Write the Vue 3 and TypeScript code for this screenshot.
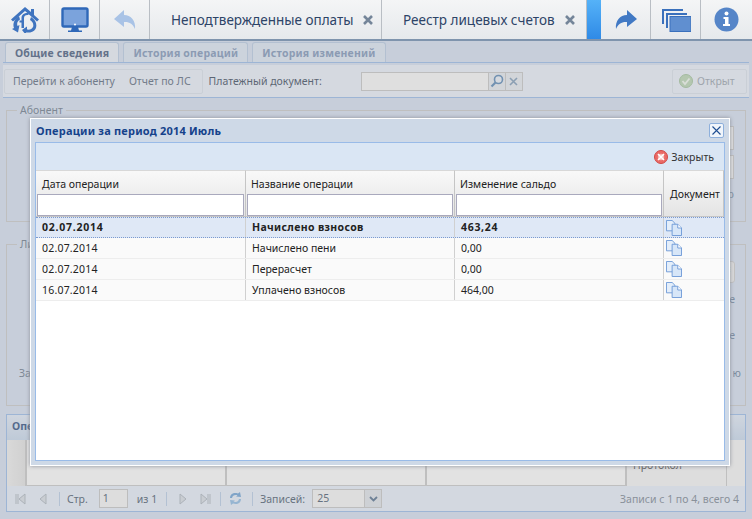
<script setup lang="ts">
const rows = [
  { date: '02.07.2014', name: 'Начислено взносов', sum: '463,24', active: true },
  { date: '02.07.2014', name: 'Начислено пени', sum: '0,00', active: false },
  { date: '02.07.2014', name: 'Перерасчет', sum: '0,00', active: false },
  { date: '16.07.2014', name: 'Уплачено взносов', sum: '464,00', active: false },
]
</script>

<template>
  <div class="page">
    <!-- top bar -->
    <header class="topbar">
      <button class="tbtn">
        <svg width="28" height="26" viewBox="0 0 28 26">
          <path d="M14 0 L20 5 V2 H23 V8 L28 12.500 L26 14.500 L14 4 L2 14.500 L0 12.500Z" fill="#3f74bf" />
          <path d="M8 9 C3 12 1.500 17 3 21 L1 22 L7 25.500 L8.500 18 L6.500 19 C5.500 16 6.500 14 9 12.500Z" fill="#3f74bf" />
          <path d="M20 10 C25 13 26.500 18 24.500 22 C22.500 25 19 26 15 25.500 L15 28 L11 23 L16 19.500 L16 22.500 C19 23 21 22 22 20 C23 17 21.500 14.500 19 13Z" fill="#3f74bf" />
          <path d="M17.500 8 C15 7.500 13 8.500 13 11 V21 H10.500 V15.500 H8.500 V13.500 H10.500 V11 C10.500 7 14 5.500 17.500 6Z" fill="#3f74bf" />
        </svg>
      </button>
      <button class="tbtn">
        <svg width="28" height="26" viewBox="0 0 28 26">
          <rect x="1.500" y="1.500" width="25" height="18" rx="1.500" fill="#7ba3dc" stroke="#2f68b8" stroke-width="2.400" />
          <circle cx="14" cy="17.500" r="1" fill="#fff" />
          <path d="M11 20 H17 L18 23.500 H21 V25 H7 V23.500 H10Z" fill="#2f68b8" />
        </svg>
      </button>
      <button class="tbtn">
        <svg width="24" height="22" viewBox="0 0 24 22">
          <path d="M11 1 L1 10 L11 18 V13 C16 12.500 20 15 22 20 C23 12 18 6 11 6Z" fill="#a9c3e6" />
        </svg>
      </button>
      <div class="ttab first">
        Неподтвержденные оплаты
        <svg class="tx" width="10" height="10" viewBox="0 0 10 10"><path d="M1 1 L9 9 M9 1 L1 9" stroke="#748599" stroke-width="2.600" /></svg>
      </div>
      <div class="ttab second">
        Реестр лицевых счетов
        <svg class="tx" width="10" height="10" viewBox="0 0 10 10"><path d="M1 1 L9 9 M9 1 L1 9" stroke="#748599" stroke-width="2.600" /></svg>
      </div>
      <div class="tblue"></div>
      <button class="tbtn">
        <svg width="24" height="22" viewBox="0 0 24 22">
          <path d="M13 1 L23 10 L13 18 V13 C8 12.500 4 15 2 20 C1 12 6 6 13 6Z" fill="#4179c4" />
        </svg>
      </button>
      <button class="tbtn">
        <svg width="30" height="24" viewBox="0 0 30 24">
          <path d="M1 16 V1 H22 V3 H3 V16Z" fill="#3a70bc" />
          <path d="M5 20 V5 H26 V7 H7 V20Z" fill="#3a70bc" />
          <rect x="9" y="8.500" width="21" height="15" fill="#608fd0" stroke="#3a70bc" />
        </svg>
      </button>
      <button class="tbtn last">
        <svg width="25" height="25" viewBox="0 0 25 25">
          <circle cx="12.500" cy="12.500" r="12" fill="#5585c8" />
          <circle cx="12.500" cy="6.500" r="2" fill="#fff" />
          <path d="M9.500 10 H14.500 V17 H16 V19 H9 V17 H11 V12 H9.500Z" fill="#fff" />
        </svg>
      </button>
    </header>

    <!-- background card, dimmed by the modal mask -->
    <main class="content">
      <nav class="subtabs">
        <div class="subtab on">Общие сведения</div>
        <div class="subtab">История операций</div>
        <div class="subtab">История изменений</div>
      </nav>
      <div class="toolbar">
        <div class="btn-group">
          <span>Перейти к абоненту</span>
          <span>Отчет по ЛС</span>
        </div>
        <label class="doc-label">Платежный документ:</label>
        <div class="doc-field">
          <div class="doc-input"></div>
          <div class="doc-btn">
            <svg width="14" height="14" viewBox="0 0 14 14">
              <circle cx="8.500" cy="5.500" r="4" fill="#e8eef6" stroke="#5a87b5" stroke-width="1.600" />
              <path d="M5.500 8.500 L1.500 12.500" stroke="#5a87b5" stroke-width="2.200" />
            </svg>
          </div>
          <div class="doc-btn clear">
            <svg width="9" height="9" viewBox="0 0 9 9">
              <path d="M1 1 L8 8 M8 1 L1 8" stroke="#7f9bb8" stroke-width="1.600" />
            </svg>
          </div>
        </div>
        <div class="open-btn">
          <svg width="14" height="14" viewBox="0 0 14 14">
            <circle cx="7" cy="7" r="6.500" fill="#b9d4b4" stroke="#a2c29c" />
            <path d="M3.500 7 L6 10 L10.500 4.500" fill="none" stroke="#eef5ec" stroke-width="1.800" />
          </svg>
          Открыт
        </div>
      </div>

      <div class="body">
        <fieldset class="fs fs-top">
          <legend>Абонент</legend>
          <div class="stubs">
            <div class="stub"></div>
            <div class="stub"></div>
            <span class="frag">ю</span>
          </div>
        </fieldset>
        <fieldset class="fs fs-mid">
          <legend>Ли</legend>
          <div class="mid-right">
            <div class="mini-btn">≡</div>
            <span class="frag">е</span>
            <span class="frag second-e">е</span>
          </div>
          <div class="mid-row"><span>За</span><span class="frag">ю</span></div>
        </fieldset>
        <section class="ops">
          <div class="ops-head">Опе</div>
          <div class="ops-grid">
            <div class="oc w0"></div>
            <div class="oc w1"></div>
            <div class="oc w1"></div>
            <div class="oc w1"></div>
            <div class="oc w4"><span>Протокол</span></div>
            <div class="oc w5"></div>
          </div>
          <footer class="pager">
            <svg class="pg" width="11" height="12" viewBox="0 0 11 12"><path d="M1 1 V11 M3 1 V11 M10 1 L4 6 L10 11Z" fill="#d7dde4" stroke="#adb6c0" /></svg>
            <svg class="pg" width="8" height="12" viewBox="0 0 8 12"><path d="M7 1 L1 6 L7 11Z" fill="#d7dde4" stroke="#adb6c0" /></svg>
            <i class="sep"></i>
            <span>Стр.</span>
            <div class="page-input">1</div>
            <span class="of">из 1</span>
            <i class="sep"></i>
            <svg class="pg nx" width="8" height="12" viewBox="0 0 8 12"><path d="M1 1 L7 6 L1 11Z" fill="#d7dde4" stroke="#adb6c0" /></svg>
            <svg class="pg lst" width="11" height="12" viewBox="0 0 11 12"><path d="M10 1 V11 M8 1 V11 M1 1 L7 6 L1 11Z" fill="#d7dde4" stroke="#adb6c0" /></svg>
            <i class="sep"></i>
            <svg width="15" height="15" viewBox="0 0 15 15"><path d="M2 7 C2 3 6 1 10 2.500 L12 1 L13 6 L8 5.500 L9.500 4.500 C7 3.500 4.500 4.500 4 7Z" fill="#6fa3d6" /><path d="M13 8 C13 12 9 14 5 12.500 L3 14 L2 9 L7 9.500 L5.500 10.500 C8 11.500 10.500 10.500 11 8Z" fill="#8fbbe3" /></svg>
            <i class="sep"></i>
            <span>Записей:</span>
            <div class="size-combo">
              <div class="size-val">25</div>
              <div class="size-arrow"><svg width="9" height="6" viewBox="0 0 9 6"><path d="M1 1 L4.500 4.500 L8 1" fill="none" stroke="#55708f" stroke-width="1.800" /></svg></div>
            </div>
            <span class="total">Записи с 1 по 4, всего 4</span>
          </footer>
        </section>
      </div>
    </main>
    <div class="mask"></div>

    <!-- modal window -->
    <section class="win">
      <div class="win-title">
        <span>Операции за период 2014 Июль</span>
        <button class="win-close">
          <svg width="9" height="9" viewBox="0 0 9 9"><path d="M0.500 0.500 L8.500 8.500 M8.500 0.500 L0.500 8.500" stroke="#1f4e93" stroke-width="1.100" /></svg>
        </button>
      </div>
      <div class="win-body">
        <div class="win-tools">
          <svg width="14" height="14" viewBox="0 0 14 14">
            <circle cx="7" cy="7" r="6.500" fill="#ea6a66" stroke="#cf4a46" />
            <circle cx="7" cy="7" r="3.200" fill="#f6b9b5" />
            <path d="M4 4 L10 10 M10 4 L4 10" stroke="#fff" stroke-width="1.500" />
          </svg>
          <span>Закрыть</span>
        </div>
        <div class="thead">
          <div class="th"><div class="th-t">Дата операции</div><div class="filter"></div></div>
          <div class="th"><div class="th-t">Название операции</div><div class="filter"></div></div>
          <div class="th"><div class="th-t">Изменение сальдо</div><div class="filter"></div></div>
          <div class="th doc">Документ</div>
        </div>
        <div v-for="(r, i) in rows" :key="i" class="tr" :class="{ active: r.active }">
          <div class="td date">{{ r.date }}</div>
          <div class="td">{{ r.name }}</div>
          <div class="td sum">{{ r.sum }}</div>
          <div class="td ic">
            <svg width="16" height="16" viewBox="0 0 17 17">
              <path d="M0.500 0.500 H6.500 L9.500 3.500 V11.500 H0.500Z" fill="#e4eefa" stroke="#6f9bd8" />
              <path d="M6.500 4.500 H12.500 L16.500 8.500 V16.500 H6.500Z" fill="#d7e6f8" stroke="#6f9bd8" />
              <path d="M12.500 4.500 V8.500 H16.500" fill="#fff" stroke="#6f9bd8" />
            </svg>
          </div>
        </div>
      </div>
    </section>
  </div>
</template>

<style scoped>
.page {
  position: relative;
  width: 752px;
  height: 519px;
  overflow: hidden;
  background: #dfe8f6;
  font-family: "Noto Sans", "Liberation Sans", sans-serif;
  font-size: 10.5px;
  color: #222;
}

/* top bar */
.topbar {
  display: flex;
  height: 39px;
  background: linear-gradient(#f4f5f6, #e6e9ec);
  border-bottom: 2px solid #7f94ad;
}
.tbtn {
  width: 50px;
  flex: none;
  padding: 0;
  border: 0;
  border-right: 1px solid #b9bec4;
  background: none;
  display: flex;
  align-items: center;
  justify-content: center;
}
.tbtn.last {
  border-right: 0;
  flex: 1;
}
.ttab {
  display: flex;
  align-items: center;
  flex: none;
  padding-left: 21px;
  font-size: 13.5px;
  color: #2d4467;
  border-right: 1px solid #b9bec4;
}
.ttab.first { width: 232px; box-sizing: border-box; }
.ttab.second { width: 205px; box-sizing: border-box; }
.tx { margin-left: 10px; }
.tblue {
  width: 14px;
  flex: none;
  background: linear-gradient(#55b2f8, #2f8ae6);
}

/* background */
.content {
  height: 478px;
  padding: 1px 3px 0;
  box-sizing: border-box;
  background: #d4dff0;
}
.subtabs {
  display: flex;
  gap: 4px;
  height: 20px;
  padding-left: 2px;
  border-bottom: 1px solid #99bbe8;
}
.subtab {
  padding: 3px 9px 0;
  font-weight: 700;
  letter-spacing: 0.2px;
  color: #7f95b8;
  background: #dbe5f3;
  border: 1px solid #b8cae2;
  border-bottom: 0;
  border-radius: 3px 3px 0 0;
}
.subtab.on {
  color: #465a7d;
  background: #e8eef6;
}
.toolbar {
  display: flex;
  align-items: center;
  height: 32px;
  padding: 0 1px;
  margin-top: 2px;
  background: #e8eef8;
  border-bottom: 1px solid #99bbe8;
  color: #3c4a5e;
}
.btn-group {
  display: flex;
  gap: 14px;
  padding: 3px 11px 3px 8px;
  height: 25px;
  box-sizing: border-box;
  align-items: center;
  border: 1px solid #d8e0ea;
  border-radius: 2px;
  color: #5a687c;
}
.doc-label { margin-left: 6px; width: 152px; }
.doc-field { display: flex; height: 19px; }
.doc-input {
  width: 128px;
  background: #f6f6f6;
  border: 1px solid #c6c6c6;
  box-sizing: border-box;
}
.doc-btn {
  width: 16px;
  display: flex;
  align-items: center;
  justify-content: center;
  background: #e4e8ee;
  border: 1px solid #c6c6c6;
  border-left: 0;
}
.open-btn {
  margin-left: auto;
  margin-right: 1px;
  display: flex;
  align-items: center;
  gap: 4px;
  width: 75px;
  height: 25px;
  box-sizing: border-box;
  padding-left: 6px;
  color: #9aa3ad;
  border: 1px solid #d8e0ea;
  border-radius: 2px;
}
.body { padding: 0 0 0 3px; }
.fs {
  margin: 0 3px 0 0;
  padding: 0;
  border: 1px solid #c9c9c9;
  color: #6c7a8c;
  position: relative;
}
.fs legend { margin-left: 10px; padding: 0 3px; }
.fs-top { height: 117px; margin-top: 5px; }
.fs-mid { height: 167px; margin-top: 15px; }
.stubs {
  position: absolute;
  top: 9px;
  right: 11px;
  display: flex;
  flex-direction: column;
  align-items: flex-end;
  gap: 5px;
}
.stub {
  width: 20px;
  height: 22px;
  background: #f6f6f6;
  border: 1px solid #c8c8c8;
}
.stubs .frag { margin-top: 3px; }
.frag { color: #6a7f9a; }
.mid-right {
  position: absolute;
  top: 10px;
  right: 10px;
  display: flex;
  flex-direction: column;
  align-items: flex-end;
  gap: 9px;
}
.second-e { margin-top: 13px; }
.mini-btn {
  width: 14px;
  height: 20px;
  text-align: center;
  background: #eee;
  border: 1px solid #ccc;
  border-radius: 3px;
}
.mid-row {
  position: absolute;
  top: 115px;
  left: 12px;
  right: 4px;
  display: flex;
  justify-content: space-between;
}
.ops {
  margin: 8px 3px 0 0;
  height: 98px;
  border: 1px solid #99bbe8;
  box-sizing: border-box;
}
.ops-head {
  height: 25px;
  box-sizing: border-box;
  padding: 4px 5px 0;
  font-weight: 700;
  color: #2f4f80;
  background: linear-gradient(#e0e9f6, #c8d8ec);
}
.ops-grid {
  display: flex;
  height: 46px;
  background: #f0f0f0;
}
.oc { box-sizing: border-box; border-right: 2px solid #c9c9c9; border-bottom: 1px solid #c9c9c9; background: #fbfbfb; }
.w0 { width: 20px; background: linear-gradient(90deg, #eee, #e2e2e2); border-bottom: 0; }
.w1 { width: 200px; }
.w4 { width: 100px; border-right-width: 1px; background: #f4f4f4; border-bottom: 0; overflow: hidden; }
.w4 span { display: block; padding: 18px 0 0 6px; color: #444; }
.w5 { flex: 1; border-right: 0; border-bottom: 0; background: #f4f4f4; }
.pager {
  display: flex;
  align-items: center;
  gap: 7px;
  height: 25px;
  padding: 0 6px 0 5px;
  color: #4a5a6e;
  background: #e6edf8;
}
.sep { width: 1px; height: 14px; margin-left: 2px; background: #b8cce6; }
.pg { margin: 0 3px; }
.pg.nx { margin-left: 5px; }
.pg.lst { margin-right: 0; }
.page-input {
  width: 29px;
  height: 19px;
  margin-left: 4px;
  box-sizing: border-box;
  padding-left: 3px;
  line-height: 17px;
  background: #f4f4f4;
  border: 1px solid #c6c6c6;
}
.of { margin-left: 2px; }
.size-combo { display: flex; height: 19px; }
.size-val {
  width: 47px;
  padding-left: 4px;
  line-height: 17px;
  background: #f4f4f4;
  border: 1px solid #c6c6c6;
}
.size-arrow {
  width: 16px;
  display: flex;
  align-items: center;
  justify-content: center;
  background: #dfe3e8;
  border: 1px solid #c6c6c6;
  border-left: 0;
}
.total { margin-left: auto; color: #7c8794; }

.mask {
  position: absolute;
  inset: 41px 0 0;
  background: rgba(170, 170, 170, 0.3);
}

/* modal */
.win {
  position: absolute;
  left: 30px;
  top: 118px;
  width: 700px;
  height: 348px;
  box-sizing: border-box;
  background: #ced9e7;
  border: 1px solid #fff;
  box-shadow: 0 0 4px #8c9099;
  padding: 0 4px 4px;
  display: flex;
  flex-direction: column;
}
.win-title {
  display: flex;
  align-items: center;
  justify-content: space-between;
  height: 23px;
  flex: none;
  font-size: 11px;
  font-weight: 700;
  letter-spacing: 0.2px;
  color: #15428b;
}
.win-title span { margin-left: 1px; }
.win-close {
  width: 15px;
  height: 15px;
  padding: 0;
  margin-right: 1px;
  display: flex;
  align-items: center;
  justify-content: center;
  background: #f0f5fb;
  border: 1px solid #8eb0dc;
  border-radius: 2px;
}
.win-body {
  flex: 1;
  background: #fff;
  border: 1px solid #99bbe8;
}
.win-tools {
  display: flex;
  align-items: center;
  justify-content: flex-end;
  gap: 4px;
  height: 27px;
  padding-right: 10px;
  background: #dae6f4;
  color: #333;
}
.thead {
  display: flex;
  height: 47px;
  box-sizing: border-box;
  border-bottom: 1px solid #c5c5c5;
  background: linear-gradient(#f9f9f9, #e4e4e4);
}
.th {
  width: 209px;
  flex: none;
  box-sizing: border-box;
  border-right: 1px solid #c5c5c5;
  border-top: 1px solid #d8d8d8;
}
.th:first-child, .td:first-child { width: 210px; }
.th-t {
  height: 23px;
  line-height: 26px;
  padding-left: 5px;
}
.th:first-child .th-t { padding-left: 6px; }
.filter {
  height: 22px;
  box-sizing: border-box;
  margin: 0 1px 0 1px;
  background: #fff;
  border: 1px solid #a9a9bd;
}
.th.doc {
  flex: 1;
  display: flex;
  align-items: center;
  padding-left: 6px;
}
.tr {
  display: flex;
  height: 21px;
  box-sizing: border-box;
  background: #fafafa;
  border-bottom: 1px solid #ededed;
}
.tr.active {
  font-weight: 700;
  letter-spacing: 0.35px;
  background: #dfe8f6;
  border-top: 1px dotted #7b9ad0;
  border-bottom: 1px dotted #7b9ad0;
}
.td {
  width: 209px;
  flex: none;
  box-sizing: border-box;
  padding-left: 6px;
  line-height: 21px;
  border-right: 1px solid #d0d0d0;
}
.td.date { letter-spacing: 0.2px; }
.tr.active .td { line-height: 18px; }
.tr.active .td.date { letter-spacing: 0.75px; }
.tr.active .td.sum { letter-spacing: 0.7px; }
.td.ic {
  flex: 1;
  padding: 2px 0 0 2px;
  border-right: 0;
}
</style>

<style>
html, body { margin: 0; }
</style>
